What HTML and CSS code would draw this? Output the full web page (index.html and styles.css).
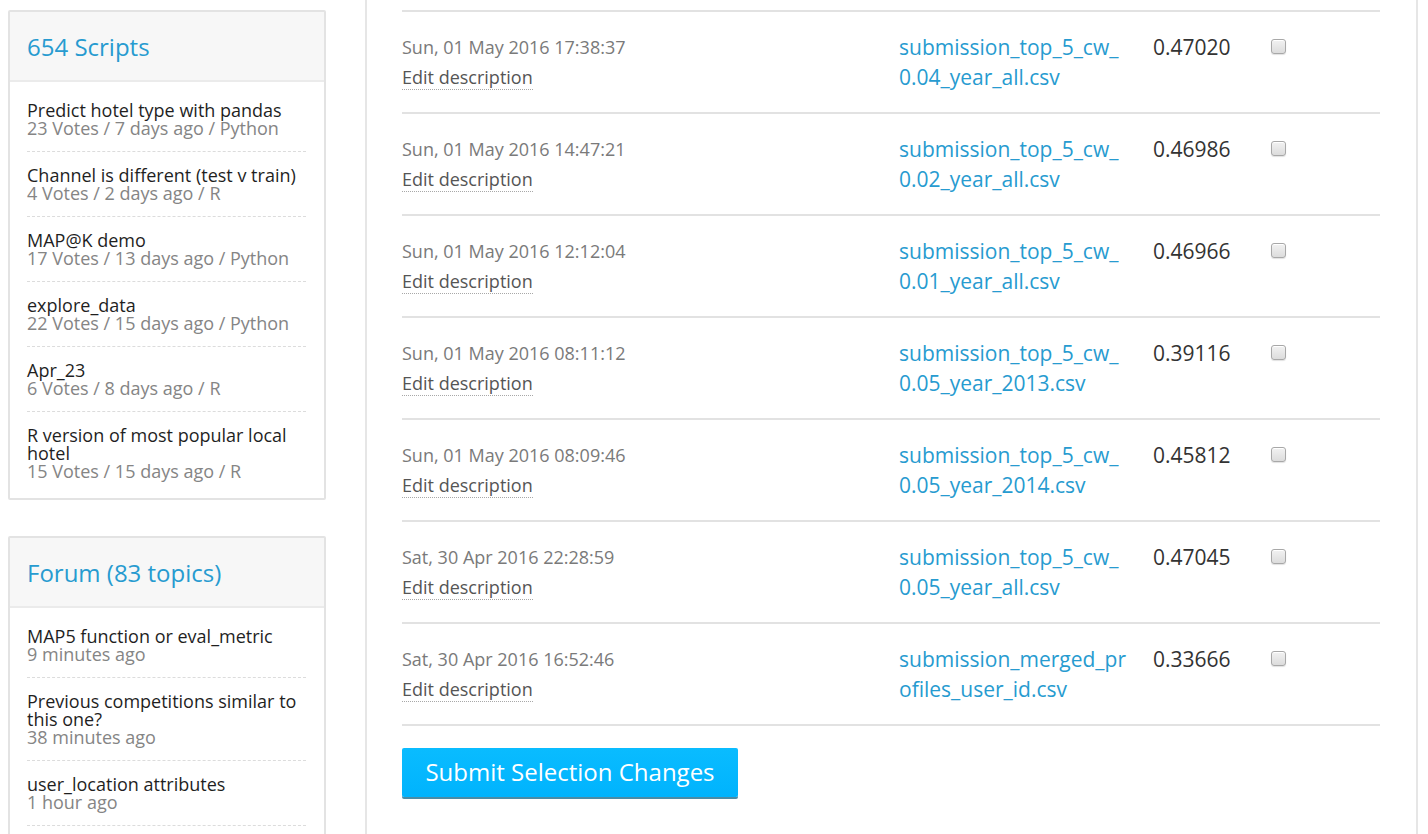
FILE: index.html
```html
<!DOCTYPE html>
<html>
<head>
<meta charset="utf-8">
<title>Submissions</title>
<link rel="stylesheet" href="styles.css">
</head>
<body>
<div class="page">
  <aside class="sidebar">
    <section class="box">
      <h2 class="box-head">654 Scripts</h2>
      <ul class="box-list">
        <li class="item"><div class="item-title">Predict hotel type with pandas</div><div class="item-meta">23 Votes / 7 days ago / Python</div></li>
        <li class="item"><div class="item-title">Channel is different (test v train)</div><div class="item-meta">4 Votes / 2 days ago / R</div></li>
        <li class="item"><div class="item-title">MAP@K demo</div><div class="item-meta">17 Votes / 13 days ago / Python</div></li>
        <li class="item"><div class="item-title">explore_data</div><div class="item-meta">22 Votes / 15 days ago / Python</div></li>
        <li class="item"><div class="item-title">Apr_23</div><div class="item-meta">6 Votes / 8 days ago / R</div></li>
        <li class="item"><div class="item-title">R version of most popular local hotel</div><div class="item-meta">15 Votes / 15 days ago / R</div></li>
      </ul>
    </section>
    <section class="box">
      <h2 class="box-head">Forum (83 topics)</h2>
      <ul class="box-list">
        <li class="item"><div class="item-title">MAP5 function or eval_metric</div><div class="item-meta">9 minutes ago</div></li>
        <li class="item"><div class="item-title">Previous competitions similar to this one?</div><div class="item-meta">38 minutes ago</div></li>
        <li class="item"><div class="item-title">user_location attributes</div><div class="item-meta">1 hour ago</div></li>
        <li class="item"><div class="item-title">Leaderboard question</div><div class="item-meta">2 hours ago</div></li>
      </ul>
    </section>
  </aside>
  <main class="main">
    <table class="subs">
      <tbody>
        <tr>
          <td class="c-date"><div class="date">Sun, 01 May 2016 17:38:37</div><a class="edit">Edit description</a></td>
          <td class="c-file"><a class="file">submission_top_5_cw_0.04_year_all.csv</a></td>
          <td class="c-score">0.47020</td>
          <td class="c-check"><input type="checkbox" class="cb"></td>
        </tr>
        <tr>
          <td class="c-date"><div class="date">Sun, 01 May 2016 14:47:21</div><a class="edit">Edit description</a></td>
          <td class="c-file"><a class="file">submission_top_5_cw_0.02_year_all.csv</a></td>
          <td class="c-score">0.46986</td>
          <td class="c-check"><input type="checkbox" class="cb"></td>
        </tr>
        <tr>
          <td class="c-date"><div class="date">Sun, 01 May 2016 12:12:04</div><a class="edit">Edit description</a></td>
          <td class="c-file"><a class="file">submission_top_5_cw_0.01_year_all.csv</a></td>
          <td class="c-score">0.46966</td>
          <td class="c-check"><input type="checkbox" class="cb"></td>
        </tr>
        <tr>
          <td class="c-date"><div class="date">Sun, 01 May 2016 08:11:12</div><a class="edit">Edit description</a></td>
          <td class="c-file"><a class="file">submission_top_5_cw_0.05_year_2013.csv</a></td>
          <td class="c-score">0.39116</td>
          <td class="c-check"><input type="checkbox" class="cb"></td>
        </tr>
        <tr>
          <td class="c-date"><div class="date">Sun, 01 May 2016 08:09:46</div><a class="edit">Edit description</a></td>
          <td class="c-file"><a class="file">submission_top_5_cw_0.05_year_2014.csv</a></td>
          <td class="c-score">0.45812</td>
          <td class="c-check"><input type="checkbox" class="cb"></td>
        </tr>
        <tr>
          <td class="c-date"><div class="date">Sat, 30 Apr 2016 22:28:59</div><a class="edit">Edit description</a></td>
          <td class="c-file"><a class="file">submission_top_5_cw_0.05_year_all.csv</a></td>
          <td class="c-score">0.47045</td>
          <td class="c-check"><input type="checkbox" class="cb"></td>
        </tr>
        <tr>
          <td class="c-date"><div class="date">Sat, 30 Apr 2016 16:52:46</div><a class="edit">Edit description</a></td>
          <td class="c-file"><a class="file">submission_merged_profiles_user_id.csv</a></td>
          <td class="c-score">0.33666</td>
          <td class="c-check"><input type="checkbox" class="cb"></td>
        </tr>
      </tbody>
    </table>
    <button class="submit" type="button">Submit Selection Changes</button>
  </main>
</div>
</body>
</html>
```

FILE: styles.css
```css
* { box-sizing: border-box; }
html, body { margin: 0; padding: 0; background: #fff; overflow: hidden; }
body {
  font-family: "Open Sans", "Noto Sans", sans-serif;
  color: #222;
  height: 834px;
}
.page {
  display: flex;
  align-items: flex-start;
  padding-left: 8px;
  height: 834px;
}
.sidebar {
  width: 318px;
  flex: none;
  padding-top: 10px;
}
.box {
  border: 2px solid #e3e3e3;
  border-radius: 2px;
  background: #fff;
  margin-bottom: 36px;
}
.box-head {
  margin: 0;
  height: 70px;
  padding: 0 0 0 17px;
  display: flex;
  align-items: center;
  background: #f7f7f7;
  border-bottom: 2px solid #ebebeb;
  font-weight: 400;
  font-size: 24px;
  color: #279bd0;
}
.box-list {
  list-style: none;
  margin: 0;
  padding: 5px 18px 4px 17px;
}
.item {
  padding: 14px 0 14px;
  border-bottom: 1px dashed #dcdcdc;
  font-size: 18px;
  line-height: 18px;
}
.item:last-child { border-bottom: none; }
.item-title { color: #1f1f1f; }
.item-meta { color: #858585; }

.main {
  flex: none;
  margin-left: 39px;
  width: 1053px;
  height: 834px;
  border-left: 2px solid #e6e6e6;
  border-right: 2px solid #e6e6e6;
  padding: 10px 36px 0 35px;
}
.subs {
  width: 978px;
  border-collapse: collapse;
  table-layout: fixed;
}
.subs tr {
  border-top: 2px solid #e2e2e2;
  border-bottom: 2px solid #e2e2e2;
}
.subs td {
  vertical-align: top;
  padding: 20px 0 20px;
  line-height: 30px;
  font-size: 18px;
}
.c-date { width: 497px; }
.c-file { width: 254px; }
.c-score { width: 118px; }
.date {
  color: #7a7a7a;
}
.edit {
  color: #555;
  border-bottom: 1px dotted #a8a8a8;
}
.file {
  display: block;
  width: 230px;
  font-size: 21px;
  color: #279bd0;
  word-break: break-all;
}
.subs .c-score {
  font-size: 21px;
  color: #333;
}
.subs .c-check { padding-top: 27px; }
.cb {
  -webkit-appearance: none;
  appearance: none;
  display: block;
  margin: 0;
  width: 15px;
  height: 15px;
  border: 1px solid #a8a8a8;
  border-radius: 3px;
  background: linear-gradient(#f2f2f2, #dcdcdc);
  box-shadow: inset 0 1px 0 #fff, 0 1px 1px rgba(0,0,0,0.12);
}
.submit {
  display: block;
  margin-top: 22px;
  width: 336px;
  height: 49px;
  border: none;
  border-radius: 2px;
  background: linear-gradient(#0abcff, #00b3fd);
  box-shadow: 0 2px 0 #4b8ca6;
  color: #fff;
  font-family: "Open Sans", "Noto Sans", sans-serif;
  font-size: 24px;
  padding: 0 0 2px;
  cursor: pointer;
}
```
